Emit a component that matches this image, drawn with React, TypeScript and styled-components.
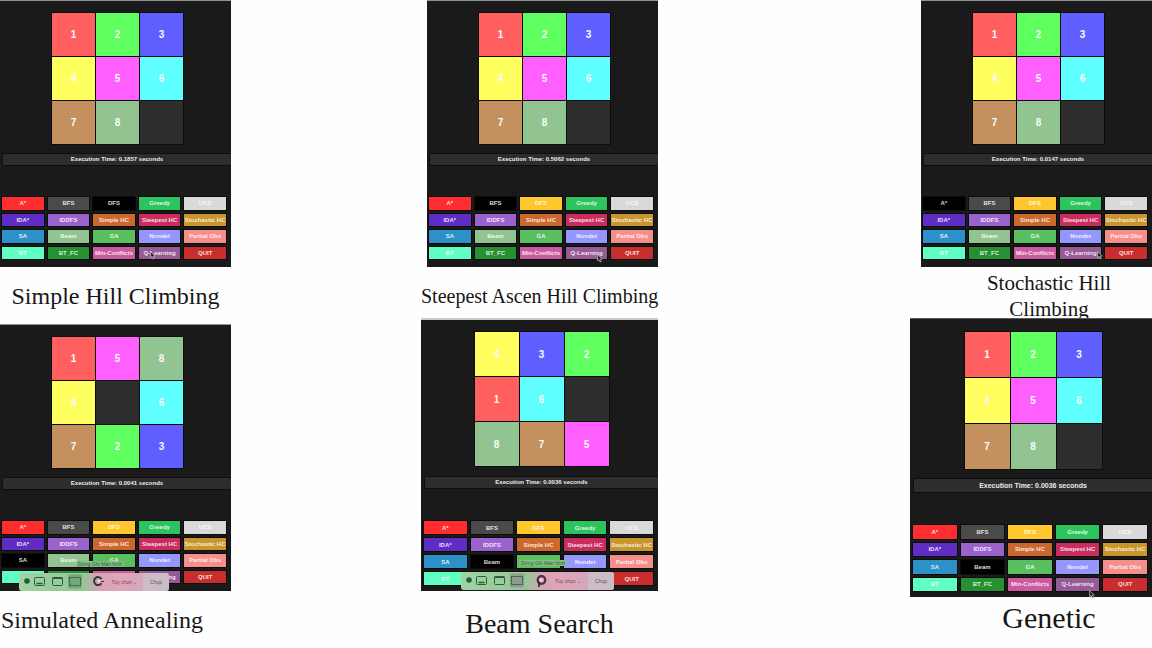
import React from 'react';
import styled, { createGlobalStyle } from 'styled-components';

const GlobalStyle = createGlobalStyle`
  * { box-sizing: border-box; }
  body { margin: 0; background: #fefefe; }
`;

type Size = 'sm' | 'md' | 'lg';

const SIZES = {
  sm: { width: 231, top: 12, edge: 1, tile: 43, boardGap: 9, bar: 13, text: 6, keysGap: 31, keys: 62, bottom: 8, side: 2, edgeColor: '#8f9490' },
  md: { width: 237, top: 12, edge: 2, tile: 44, boardGap: 10, bar: 13, text: 6, keysGap: 32, keys: 64, bottom: 6, side: 3, edgeColor: '#c9c9c9' },
  lg: { width: 242, top: 13, edge: 1, tile: 45, boardGap: 9, bar: 15, text: 7, keysGap: 32, keys: 66, bottom: 6, side: 3, edgeColor: '#5c5c5c' },
};

const Page = styled.main`
  display: grid;
  grid-template-columns: 231px 190fr 237px 252fr 242px;
  overflow: hidden;
`;

const Column = styled.section<{ $at: number }>`
  grid-column: ${(p) => p.$at};
  display: flex;
  flex-direction: column;
  min-width: 0;
`;

const Figure = styled.figure`
  margin: 0;
  display: flex;
  flex-direction: column;
`;

const Panel = styled.div<{ $size: Size }>`
  position: relative;
  align-self: flex-end;
  display: flex;
  flex-direction: column;
  width: ${(p) => SIZES[p.$size].width}px;
  padding: ${(p) => SIZES[p.$size].top}px 0 ${(p) => SIZES[p.$size].bottom}px;
  border-top: ${(p) => SIZES[p.$size].edge}px solid ${(p) => SIZES[p.$size].edgeColor};
  background: #1a1a1a;
  font-family: 'Liberation Sans', Arial, sans-serif;
  font-weight: 700;
`;

const Board = styled.div<{ $size: Size }>`
  align-self: center;
  display: grid;
  grid-template-columns: repeat(3, ${(p) => SIZES[p.$size].tile}px);
  grid-auto-rows: ${(p) => SIZES[p.$size].tile}px;
  gap: 1px;
  margin-left: 4px;
  background: #0c0c0c;
  box-shadow: 0 0 0 1px #0c0c0c;
`;

const Tile = styled.div<{ $color: string }>`
  display: flex;
  align-items: center;
  justify-content: center;
  background: ${(p) => p.$color};
  color: #fafafa;
  font-size: 10px;
  line-height: 11px;
`;

const TimeBar = styled.div<{ $size: Size }>`
  display: flex;
  align-items: center;
  justify-content: center;
  height: ${(p) => SIZES[p.$size].bar}px;
  margin: ${(p) => SIZES[p.$size].boardGap}px 0 0 ${(p) => SIZES[p.$size].side}px;
  border: 1px solid #0e0e0e;
  border-right: 0;
  background: #2d2d2d;
  color: #ececec;
  font-size: ${(p) => SIZES[p.$size].text}px;
  line-height: 9px;
  white-space: nowrap;
`;

const Keys = styled.div<{ $size: Size }>`
  display: grid;
  grid-template-columns: repeat(5, minmax(0, 1fr));
  grid-template-rows: repeat(4, minmax(0, 1fr));
  gap: 4px;
  height: ${(p) => SIZES[p.$size].keys}px;
  margin: ${(p) => SIZES[p.$size].keysGap}px 5px 0 ${(p) => SIZES[p.$size].side}px;
`;

const Key = styled.button<{ $color: string }>`
  display: flex;
  align-items: center;
  justify-content: center;
  min-width: 0;
  padding: 0;
  border: 0;
  background: ${(p) => p.$color};
  box-shadow: 0 0 0 1px #0c0c0c;
  color: rgba(255, 255, 255, 0.86);
  font: inherit;
  font-size: 6px;
  line-height: 8px;
  white-space: nowrap;
`;

const Caption = styled.figcaption<{ $text: number; $height: number; $top?: number; $left?: number; $start?: boolean }>`
  display: flex;
  align-items: center;
  justify-content: ${(p) => (p.$start ? 'flex-start' : 'center')};
  height: ${(p) => p.$height}px;
  padding-top: ${(p) => p.$top ?? 0}px;
  padding-left: ${(p) => p.$left ?? 0}px;
  color: #161616;
  font-family: 'Liberation Serif', 'Times New Roman', serif;
  font-size: ${(p) => p.$text}px;
  line-height: 26px;
  text-align: center;
  white-space: pre;
`;

const Cursor = styled.svg<{ $x: number; $y: number }>`
  position: absolute;
  left: ${(p) => p.$x}px;
  top: ${(p) => p.$y}px;
  width: 6px;
  height: 9px;
`;

const Hint = styled.div<{ $x: number; $y: number }>`
  position: absolute;
  left: ${(p) => p.$x}px;
  top: ${(p) => p.$y}px;
  padding: 0 2px;
  border-radius: 2px;
  background: #82bd83;
  color: #2e5a35;
  font-size: 5px;
  font-weight: 400;
  line-height: 6px;
  white-space: nowrap;
`;

const Recorder = styled.div<{ $x: number; $y: number; $w: number }>`
  position: absolute;
  left: ${(p) => p.$x}px;
  top: ${(p) => p.$y}px;
  width: ${(p) => p.$w}px;
  height: 18px;
  display: flex;
  align-items: stretch;
  border-radius: 3px;
  overflow: hidden;
  background: linear-gradient(90deg, #a3d2a4 0%, #93c894 42%, #d9a3b4 54%, #e0a5b8 66%, #c8a9bf 100%);
`;

const Tools = styled.svg`
  width: 87px;
  height: 17px;
  flex: none;
`;

const RecorderButton = styled.button<{ $end?: boolean }>`
  flex: ${(p) => (p.$end ? '0 0 26px' : '1 1 auto')};
  padding: 0;
  border: 0;
  background: ${(p) => (p.$end ? '#cbbcc8' : 'transparent')};
  color: ${(p) => (p.$end ? '#5f5160' : '#7c3b62')};
  font: inherit;
  font-size: 5px;
  font-weight: 400;
  white-space: nowrap;
`;

const TILE_COLORS: Record<number, string> = {
  0: '#2d2d2d', 1: '#ff5f5f', 2: '#5fff5f', 3: '#5f5fff', 4: '#ffff5f',
  5: '#ff5fff', 6: '#5fffff', 7: '#c4915e', 8: '#91c491',
};

const KEYS: [string, string][] = [
  ['A*', '#ff2d2d'], ['BFS', '#4a4a4a'], ['DFS', '#ffc62d'], ['Greedy', '#2dc45f'], ['UCS', '#d9d9d9'],
  ['IDA*', '#5f2dc4'], ['IDDFS', '#9a62cc'], ['Simple HC', '#cc682d'], ['Steepest HC', '#c92d5f'], ['Stochastic HC', '#c9962d'],
  ['SA', '#2d91c9'], ['Beam', '#91c491'], ['GA', '#5abf5f'], ['Nondet', '#9696ff'], ['Partial Obs', '#f68f8b'],
  ['BT', '#5fffc4'], ['BT_FC', '#259132'], ['Min-Conflicts', '#cc5a9f'], ['Q-Learning', '#965a96'], ['QUIT', '#c92d2d'],
];

interface PuzzleProps {
  size: Size;
  tiles: number[];
  time: string;
  active: string;
  children?: React.ReactNode;
}

function Puzzle({ size, tiles, time, active, children }: PuzzleProps) {
  return (
    <Panel $size={size}>
      <Board $size={size}>
        {tiles.map((n) => (
          <Tile key={n} $color={TILE_COLORS[n]}>{n || ''}</Tile>
        ))}
      </Board>
      <TimeBar $size={size}>Execution Time: {time} seconds</TimeBar>
      <Keys $size={size}>
        {KEYS.map(([label, color]) => (
          <Key key={label} type="button" $color={label === active ? '#000' : color}>{label}</Key>
        ))}
      </Keys>
      {children}
    </Panel>
  );
}

function Pointer({ x, y }: { x: number; y: number }) {
  return (
    <Cursor $x={x} $y={y} viewBox="0 0 6 9" aria-hidden="true">
      <path d="M.6.6v6.2l1.5-1.3 1 2.6 1.2-.5-1-2.5h2z" fill="#222" stroke="#ddd" strokeWidth=".6" />
    </Cursor>
  );
}

function ScreenRecorder({ x, y, w, ring }: { x: number; y: number; w: number; ring: 'open' | 'closed' }) {
  return (
    <Recorder $x={x} $y={y} $w={w}>
      <Tools viewBox="0 0 87 17" fill="none" stroke="#2c5b3c" aria-hidden="true">
        <circle cx="8" cy="8" r="2.8" fill="#17643e" stroke="none" />
        <rect x="15.5" y="4.5" width="10" height="8" rx="1" />
        <path d="M17.500 10.500h6" strokeWidth="1.6" />
        <rect x="33.5" y="4.5" width="10" height="8" rx="1" />
        <path d="M33.5 5.300h10" strokeWidth="1.6" />
        <rect x="49" y="1.500" width="14" height="14" rx="2" fill={ring === 'open' ? '#74a87b' : '#8f9c90'} stroke="none" />
        <rect x="50.5" y="4.500" width="11" height="8" stroke="#2f4a3b" strokeDasharray="2 1" />
        {ring === 'open' ? (
          <path d="M82.500 6a4 4 0 1 0 0 4.200" stroke="#3b3340" strokeWidth="2" />
        ) : (
          <>
            <circle cx="80.500" cy="8" r="3.8" stroke="#4b2a46" strokeWidth="2.2" />
            <path d="M78 10v5" stroke="#2b1a29" strokeWidth="1.6" />
          </>
        )}
        <circle cx="80" cy="8" r="1.4" fill="#f2dbe4" stroke="none" />
        {ring === 'open' && <path d="M82 8.500h3" stroke="#3b3340" />}
      </Tools>
      <RecorderButton type="button">Tùy chọn ⌄</RecorderButton>
      <RecorderButton type="button" $end>Chụp</RecorderButton>
    </Recorder>
  );
}

const SOLVED = [1, 2, 3, 4, 5, 6, 7, 8, 0];

export default function App() {
  return (
    <>
      <GlobalStyle />
      <Page>
        <Column $at={1}>
          <Figure>
            <Puzzle size="sm" tiles={SOLVED} time="0.1857" active="DFS">
              <Pointer x={150} y={250} />
            </Puzzle>
            <Caption $text={24} $height={57}>Simple Hill Climbing</Caption>
          </Figure>
          <Figure>
            <Puzzle size="sm" tiles={[1, 5, 8, 4, 0, 6, 7, 2, 3]} time="0.0041" active="SA">
              <Hint $x={76} $y={236}>Dừng Ghi Màn hình</Hint>
              <ScreenRecorder x={19} y={248} w={150} ring="open" />
            </Puzzle>
            <Caption $text={24} $height={57} $start $left={1}>Simulated Annealing</Caption>
          </Figure>
        </Column>
        <Column $at={3}>
          <Figure>
            <Puzzle size="sm" tiles={SOLVED} time="0.5062" active="BFS">
              <Pointer x={170} y={253} />
            </Puzzle>
            <Caption $text={20} $height={51} $top={6} $start>Steepest Ascen Hill Climbing</Caption>
          </Figure>
          <Figure>
            <Puzzle size="md" tiles={[4, 3, 2, 1, 6, 0, 8, 7, 5]} time="0.0036" active="Beam">
              <Hint $x={98} $y={240}>Dừng Ghi Màn hình</Hint>
              <ScreenRecorder x={40} y={252} w={153} ring="closed" />
            </Puzzle>
            <Caption $text={28} $height={57} $top={9}>Beam Search</Caption>
          </Figure>
        </Column>
        <Column $at={5}>
          <Figure>
            <Puzzle size="sm" tiles={SOLVED} time="0.0147" active="A*">
              <Pointer x={176} y={250} />
            </Puzzle>
            <Caption $text={21} $height={51} $top={6} $left={36}>{'Stochastic Hill\nClimbing'}</Caption>
          </Figure>
          <Figure>
            <Puzzle size="lg" tiles={SOLVED} time="0.0036" active="Beam">
              <Pointer x={179} y={271} />
            </Puzzle>
            <Caption $text={30} $height={42} $left={36}>Genetic</Caption>
          </Figure>
        </Column>
      </Page>
    </>
  );
}
